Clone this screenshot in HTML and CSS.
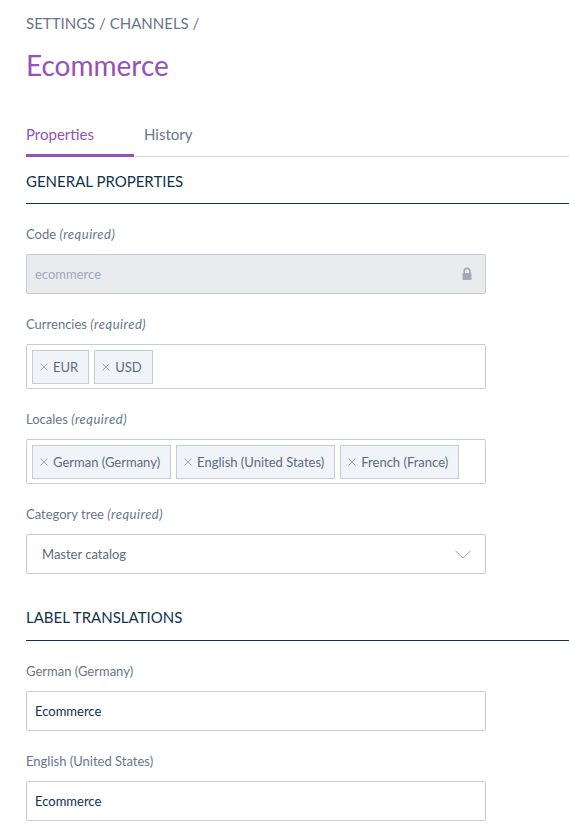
FILE: index.html
```html
<!DOCTYPE html>
<html lang="en">
<head>
<meta charset="utf-8">
<title>Ecommerce</title>
<link rel="stylesheet" href="styles.css">
</head>
<body>
<div class="page">
  <div class="breadcrumb">SETTINGS / CHANNELS /</div>
  <h1 class="title">Ecommerce</h1>
  <nav class="tabs">
    <span class="tab tab-active">Properties</span>
    <span class="tab">History</span>
  </nav>

  <section class="section">
    <h2 class="section-title">GENERAL PROPERTIES</h2>
    <div class="field">
      <label class="label">Code <em>(required)</em></label>
      <div class="input input-disabled">
        <span>ecommerce</span>
        <svg class="lock" width="10" height="13" viewBox="0 0 10 13"><path d="M2.2 6V4.2a2.8 2.8 0 0 1 5.6 0V6" fill="none" stroke="#a1a9b7" stroke-width="1.6"/><rect x="0.5" y="6" width="9" height="7" rx="0.8" fill="#a1a9b7"/></svg>
      </div>
    </div>
    <div class="field">
      <label class="label">Currencies <em>(required)</em></label>
      <div class="multi">
        <span class="tag"><svg class="x" width="8" height="8" viewBox="0 0 8 8"><path d="M0.5 0.5 7.5 7.5M7.5 0.5 0.5 7.5" stroke="#a1a9b7" stroke-width="1"/></svg>EUR</span>
        <span class="tag"><svg class="x" width="8" height="8" viewBox="0 0 8 8"><path d="M0.5 0.5 7.5 7.5M7.5 0.5 0.5 7.5" stroke="#a1a9b7" stroke-width="1"/></svg>USD</span>
      </div>
    </div>
    <div class="field">
      <label class="label">Locales <em>(required)</em></label>
      <div class="multi">
        <span class="tag"><svg class="x" width="8" height="8" viewBox="0 0 8 8"><path d="M0.5 0.5 7.5 7.5M7.5 0.5 0.5 7.5" stroke="#a1a9b7" stroke-width="1"/></svg>German (Germany)</span>
        <span class="tag"><svg class="x" width="8" height="8" viewBox="0 0 8 8"><path d="M0.5 0.5 7.5 7.5M7.5 0.5 0.5 7.5" stroke="#a1a9b7" stroke-width="1"/></svg>English (United States)</span>
        <span class="tag"><svg class="x" width="8" height="8" viewBox="0 0 8 8"><path d="M0.5 0.5 7.5 7.5M7.5 0.5 0.5 7.5" stroke="#a1a9b7" stroke-width="1"/></svg>French (France)</span>
      </div>
    </div>
    <div class="field">
      <label class="label">Category tree <em>(required)</em></label>
      <div class="input select">
        <span>Master catalog</span>
        <svg class="chevron" width="16" height="9" viewBox="0 0 16 9"><path d="M0.5 0.8 8 8 15.5 0.8" fill="none" stroke="#a1a9b7" stroke-width="1"/></svg>
      </div>
    </div>
  </section>

  <section class="section section-second">
    <h2 class="section-title section-title-second">LABEL TRANSLATIONS</h2>
    <div class="field">
      <label class="label">German (Germany)</label>
      <div class="input value"><span>Ecommerce</span></div>
    </div>
    <div class="field">
      <label class="label">English (United States)</label>
      <div class="input value"><span>Ecommerce</span></div>
    </div>
  </section>
</div>
</body>
</html>
```

FILE: styles.css
```css
* { box-sizing: border-box; }
html, body { margin: 0; padding: 0; background: #ffffff; }
body {
  font-family: Lato, "Open Sans", "Liberation Sans", sans-serif;
  color: #67768a;
  overflow: hidden;
}
.page {
  padding: 13px 0 0 26px;
}
.breadcrumb {
  font-size: 15px;
  line-height: 20px;
  color: #67768a;
}
.title {
  margin: 15px 0 0;
  font-size: 28px;
  line-height: 34px;
  font-weight: 400;
  color: #9452ba;
}
.tabs {
  display: flex;
  margin-top: 42px;
  border-bottom: 1px solid #d3d6dc;
}
.tab {
  font-size: 15px;
  line-height: 20px;
  padding: 0 40px 10px 10px;
  margin-bottom: -1px;
  border-bottom: 3px solid transparent;
  color: #67768a;
}
.tab-active {
  padding-left: 0;
  color: #9452ba;
  border-bottom-color: #9452ba;
}
.section { margin-top: 14px; }
.section-second { margin-top: 33px; }
.section-title {
  margin: 0 0 21px;
  font-size: 15px;
  line-height: 20px;
  font-weight: 400;
  color: #11324d;
  padding-bottom: 12px;
  border-bottom: 1px solid #11324d;
}
.section-title-second { padding-bottom: 13px; }
.field {
  width: 460px;
  margin-bottom: 21px;
}
.label {
  display: block;
  font-size: 13px;
  line-height: 18px;
  margin-bottom: 11px;
  color: #67768a;
}
.label em { font-style: italic; letter-spacing: 0.5px; }
.input {
  height: 40px;
  border: 1px solid #c7cbd4;
  border-radius: 2px;
  display: flex;
  align-items: center;
  justify-content: space-between;
  font-size: 13px;
  padding: 0 13px 0 8px;
}
.input-disabled {
  background: #e9ebee;
  color: #a1a9b7;
}
.lock { margin-top: -1px; }
.select {
  padding: 0 14px 0 15px;
  color: #5c6b7e;
}
.value { color: #11324d; }
.multi {
  height: 45px;
  border: 1px solid #c7cbd4;
  border-radius: 2px;
  display: flex;
  align-items: center;
  gap: 5px;
  padding: 0 5px;
}
.tag {
  height: 34px;
  display: flex;
  align-items: center;
  padding: 0 10px 0 7px;
  background: #f0f4f9;
  border: 1px solid #c7cbd4;
  font-size: 13px;
  color: #5c6b7e;
}
.x {
  margin-right: 5px;
  flex: none;
}
```
